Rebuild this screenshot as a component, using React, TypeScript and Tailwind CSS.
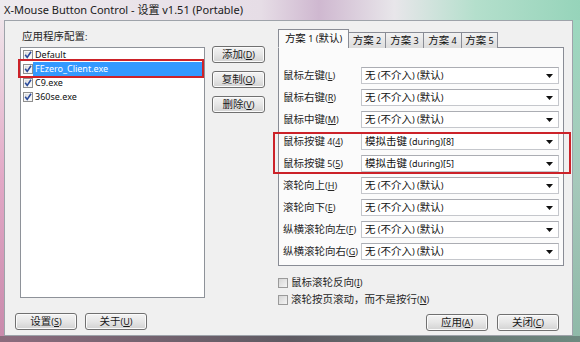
import React from "react";

const FONT = { fontFamily: "'Noto Sans','Noto Sans CJK SC',sans-serif" };

const APPS = [
  { name: "Default", selected: false },
  { name: "FEzero_Client.exe", selected: true },
  { name: "C9.exe", selected: false },
  { name: "360se.exe", selected: false },
];

const NONE = "无 (不介入) (默认)";

const ROWS = [
  { label: "鼠标左键", key: "L", value: NONE },
  { label: "鼠标右键", key: "R", value: NONE },
  { label: "鼠标中键", key: "M", value: NONE },
  { label: "鼠标按键 4", key: "4", value: "模拟击键 (during)[8]" },
  { label: "鼠标按键 5", key: "5", value: "模拟击键 (during)[5]" },
  { label: "滚轮向上", key: "H", value: NONE },
  { label: "滚轮向下", key: "E", value: NONE },
  { label: "纵横滚轮向左", key: "F", value: NONE },
  { label: "纵横滚轮向右", key: "G", value: NONE },
];

const TABS = [
  { label: "方案 1 (默认)", w: "w-[71px]" },
  { label: "方案 2", w: "w-[38px]" },
  { label: "方案 3", w: "w-[39px]" },
  { label: "方案 4", w: "w-[39px]" },
  { label: "方案 5", w: "w-[37px]" },
];

const CJK = /[\u3000-\u9fff\uff00-\uffef]/;

// latin runs are drawn a bit smaller than the CJK glyphs, like the original UI font
function T({ s }: { s: string }) {
  const parts = s.split(/([\u3000-\u9fff\uff00-\uffef]+)/);
  return (
    <>
      {parts.map((p, i) =>
        !p ? null : CJK.test(p) ? (
          <span key={i}>{p}</span>
        ) : (
          <span key={i} className="text-[9px]">
            {p}
          </span>
        )
      )}
    </>
  );
}

function Key({ label, k }: { label: string; k: string }) {
  return (
    <>
      <T s={label + "("} />
      <span className="underline text-[9px]">{k}</span>
      <T s=")" />
    </>
  );
}

function CheckedBox() {
  return (
    <svg width="10" height="10" viewBox="0 0 10 10" className="shrink-0">
      <defs>
        <linearGradient id="cbg" x1="0" y1="0" x2="1" y2="1">
          <stop offset="0" stopColor="#d9dadc" />
          <stop offset="1" stopColor="#ffffff" />
        </linearGradient>
      </defs>
      <rect x="0.5" y="0.5" width="9" height="9" fill="#f6f6f6" stroke="#8f8f8f" />
      <rect x="2" y="2" width="6" height="6" fill="url(#cbg)" />
      <path d="M2.2 4.8 L4.2 7.4 L8 1.8" fill="none" stroke="#2b4b9b" strokeWidth="1.6" />
    </svg>
  );
}

function EmptyBox() {
  return (
    <span className="w-[10px] h-[10px] shrink-0 border border-[#9a9a9a] bg-gradient-to-br from-[#d6d6d6] to-[#f4f4f4]" />
  );
}

function Button({ children, w = "w-[62px]" }: { children: React.ReactNode; w?: string }) {
  return (
    <div
      className={`${w} h-[17px] flex items-center justify-center rounded-[3px] border border-[#707070] bg-gradient-to-b from-[#f4f4f4] via-[#e6e6e6] to-[#d2d2d2] text-[#1a1a1a] shadow-[inset_0_0_0_1px_#fbfbfb]`}
    >
      <span>{children}</span>
    </div>
  );
}

function Arrow() {
  return (
    <svg width="7" height="4" viewBox="0 0 7 4" className="shrink-0">
      <path d="M0 0 H7 L3.5 4 Z" fill="#111" />
    </svg>
  );
}

function MappingRow({ label, k, value }: { label: string; k: string; value: string }) {
  return (
    <div className="flex items-center h-[17px]">
      <div className="w-[78px] shrink-0 whitespace-nowrap text-[#262626]">
        <Key label={label} k={k} />
      </div>
      <div className="w-[198px] h-[17px] flex items-center justify-between pl-[3px] pr-[5px] bg-white border border-[#c5c7cc] border-t-[#abadb3] text-[#111]">
        <span className="whitespace-nowrap">
          <T s={value} />
        </span>
        <Arrow />
      </div>
    </div>
  );
}

export default function App() {
  return (
    <div
      className="w-[580px] h-[342px] flex flex-col overflow-hidden text-[10.5px] leading-[14px] bg-[#e6dde5]"
      style={FONT}
    >
      {/* Title bar */}
      <div className="h-[20px] shrink-0 flex items-center pl-[4px] text-[11px] text-[#202020] bg-[linear-gradient(90deg,#eeeaee_0%,#e6dde6_45%,#cfb8d0_55%,#e8e6ea_68%,#b4dfcc_82%,#96d4ba_100%)]">
        X-Mouse Button Control - 设置 v1.51 (Portable)
      </div>

      <div className="flex flex-1">
        <div className="w-[4px] shrink-0 bg-gradient-to-b from-[#efe4ea] via-[#e2a8c6] to-[#c98aac]" />

        {/* Client area */}
        <div className="flex-1 flex bg-[#f0f0f0] border border-[#9ea3aa] pl-[10px] pt-[6px]">
          {/* Left column */}
          <div className="w-[190px] flex flex-col">
            <div className="ml-[7px] h-[16px] leading-[16px] mt-[1px] mb-[3px] text-[#262626]">
              <T s="应用程序配置:" />
            </div>
            <div className="ml-[5px] w-[185px] h-[251px] bg-white border border-[#8e9299] pr-[1px]">
              {APPS.map((a) => (
                <div key={a.name} className="relative flex items-center h-[14px] pl-[2px]">
                  <CheckedBox />
                  <span
                    className={`flex-1 h-[14px] pl-[2px] leading-[14px] text-[9px] ${
                      a.selected ? "bg-[#3399ff] text-white" : "text-[#111]"
                    }`}
                  >
                    {a.name}
                  </span>
                  {a.selected && (
                    <div className="absolute -left-[3px] -right-[1px] -top-[3px] -bottom-[2px] border-2 border-[#cc2229]" />
                  )}
                </div>
              ))}
            </div>
            <div className="flex gap-[8px] mt-[15px]">
              <Button>
                <Key label="设置" k="S" />
              </Button>
              <Button>
                <Key label="关于" k="U" />
              </Button>
            </div>
          </div>

          {/* Middle buttons */}
          <div className="ml-[7px] mt-[19px] flex flex-col gap-[8px]">
            <Button w="w-[53px]">
              <Key label="添加" k="D" />
            </Button>
            <Button w="w-[53px]">
              <Key label="复制" k="O" />
            </Button>
            <Button w="w-[53px]">
              <Key label="删除" k="V" />
            </Button>
          </div>

          {/* Right column */}
          <div className="ml-[13px] mt-[2px] w-[286px] flex flex-col">
            <div className="flex items-end h-[19px] -mb-[1px] relative z-10">
              {TABS.map((t, i) => (
                <div
                  key={t.label}
                  className={`${t.w} flex items-center justify-center whitespace-nowrap border border-[#898c95] text-[#111] ${
                    i === 0
                      ? "h-[19px] bg-[#fbfbfb] border-b-[#fbfbfb]"
                      : "h-[16px] -ml-[1px] border-b-0 bg-gradient-to-b from-[#f2f2f2] to-[#dcdcdc]"
                  }`}
                >
                  <span>
                    <T s={t.label} />
                  </span>
                </div>
              ))}
            </div>
            <div className="h-[219px] bg-[#fbfbfb] border border-[#898c95] pl-[4px] pt-[19px] flex flex-col gap-[5px]">
              {ROWS.slice(0, 3).map((r) => (
                <MappingRow key={r.label} label={r.label} k={r.key} value={r.value} />
              ))}
              <div className="relative flex flex-col gap-[5px]">
                {ROWS.slice(3, 5).map((r) => (
                  <MappingRow key={r.label} label={r.label} k={r.key} value={r.value} />
                ))}
                <div className="absolute -left-[10px] -right-[8px] -top-[1px] -bottom-[2px] border-2 border-[#cc2229]" />
              </div>
              {ROWS.slice(5).map((r) => (
                <MappingRow key={r.label} label={r.label} k={r.key} value={r.value} />
              ))}
            </div>

            <div className="mt-[8px] flex flex-col">
              <div className="flex items-center gap-[3px] h-[17px] text-[#262626]">
                <EmptyBox />
                <span>
                  <Key label="鼠标滚轮反向" k="I" />
                </span>
              </div>
              <div className="flex items-center gap-[3px] h-[17px] text-[#262626]">
                <EmptyBox />
                <span>
                  <Key label="滚轮按页滚动，而不是按行" k="N" />
                </span>
              </div>
            </div>

            <div className="mt-[6px] mr-[5px] flex justify-end gap-[9px]">
              <Button>
                <Key label="应用" k="A" />
              </Button>
              <Button>
                <Key label="关闭" k="C" />
              </Button>
            </div>
          </div>
        </div>

        <div className="w-[7px] shrink-0 bg-gradient-to-b from-[#9cd8bf] via-[#a6c9bb] to-[#8fb9a8]" />
      </div>

      <div className="h-[6px] shrink-0 bg-gradient-to-r from-[#8c6c7e] via-[#5e5a62] to-[#6e8a80]" />
    </div>
  );
}
